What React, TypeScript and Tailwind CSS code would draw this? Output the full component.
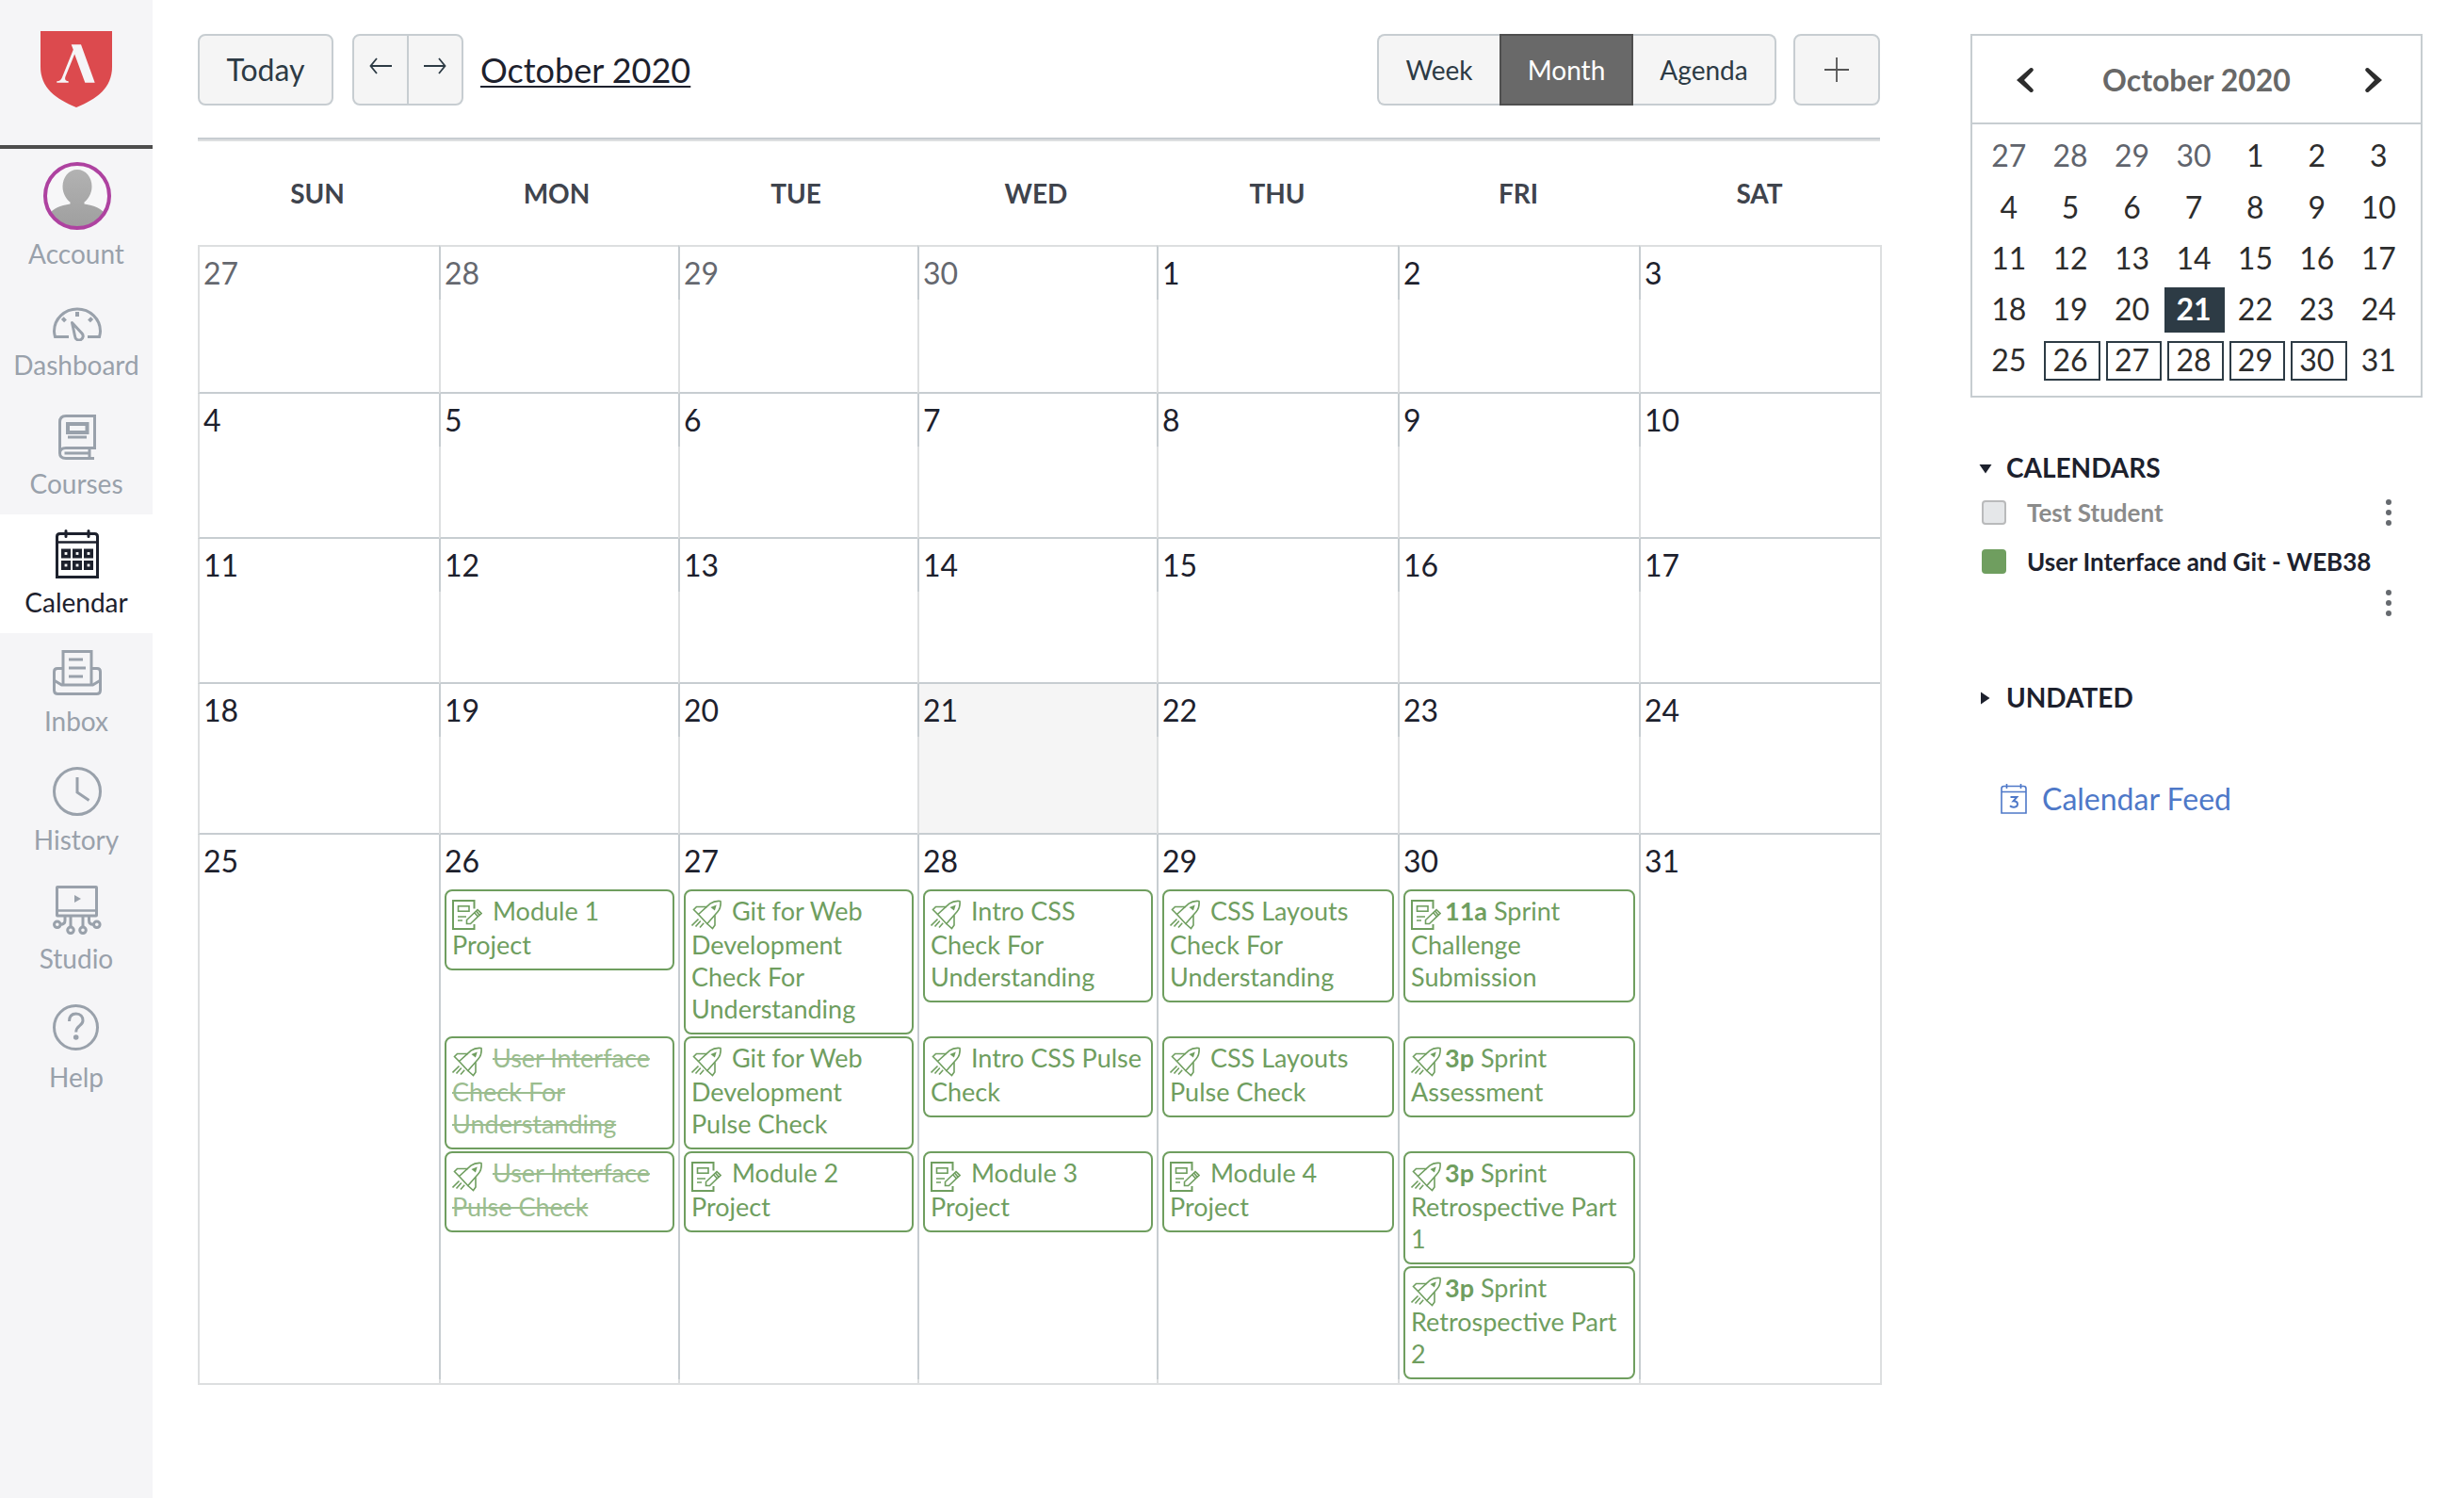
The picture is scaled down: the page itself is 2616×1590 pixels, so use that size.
import React from "react";

type IconName = "assignment" | "quiz";

interface CalendarEvent {
  icon: IconName;
  time?: string;
  title: string;
  done?: boolean;
}

const WEEKDAYS = ["SUN", "MON", "TUE", "WED", "THU", "FRI", "SAT"];

const WEEKS: number[][] = [
  [27, 28, 29, 30, 1, 2, 3],
  [4, 5, 6, 7, 8, 9, 10],
  [11, 12, 13, 14, 15, 16, 17],
  [18, 19, 20, 21, 22, 23, 24],
  [25, 26, 27, 28, 29, 30, 31],
];

/* One entry per stacked row of the last week, one slot per weekday. */
const EVENT_ROWS: (CalendarEvent | null)[][] = [
  [
    null,
    { icon: "assignment", title: "Module 1 Project" },
    { icon: "quiz", title: "Git for Web Development Check For Understanding" },
    { icon: "quiz", title: "Intro CSS Check For Understanding" },
    { icon: "quiz", title: "CSS Layouts Check For Understanding" },
    { icon: "assignment", time: "11a", title: "Sprint Challenge Submission" },
    null,
  ],
  [
    null,
    { icon: "quiz", title: "User Interface Check For Understanding", done: true },
    { icon: "quiz", title: "Git for Web Development Pulse Check" },
    { icon: "quiz", title: "Intro CSS Pulse Check" },
    { icon: "quiz", title: "CSS Layouts Pulse Check" },
    { icon: "quiz", time: "3p", title: "Sprint Assessment" },
    null,
  ],
  [
    null,
    { icon: "quiz", title: "User Interface Pulse Check", done: true },
    { icon: "assignment", title: "Module 2 Project" },
    { icon: "assignment", title: "Module 3 Project" },
    { icon: "assignment", title: "Module 4 Project" },
    { icon: "quiz", time: "3p", title: "Sprint Retrospective Part 1" },
    null,
  ],
  [null, null, null, null, null, { icon: "quiz", time: "3p", title: "Sprint Retrospective Part 2" }, null],
];

/* ---------- Icons ---------- */

function Logo() {
  return (
    <svg width="76" height="81" viewBox="0 0 76 81" aria-hidden="true">
      <path d="M0 0H76V38C76 60 60 72 38 81C16 72 0 60 0 38Z" fill="#dc4a4e" />
      <path
        d="M32.7 14.3H43L57.7 54.7H47.3L36.2 24.5L26.4 48.5C25.6 51 26.4 53 29.7 53.2V54.7H17.3V53.3C20.3 53 21.8 51.6 22.8 49.4L34.8 19.7Z"
        fill="#f5f5f7"
      />
    </svg>
  );
}

function Avatar() {
  return (
    <svg width="72" height="72" viewBox="0 0 72 72" aria-hidden="true">
      <defs>
        <linearGradient id="person" x1="0" y1="0" x2="0" y2="1">
          <stop offset="0" stopColor="#b2b2b2" />
          <stop offset="1" stopColor="#9e9e9e" />
        </linearGradient>
        <clipPath id="disc">
          <circle cx="36" cy="36" r="33" />
        </clipPath>
      </defs>
      <circle cx="36" cy="36" r="34" fill="#f7f7f8" />
      <path
        clipPath="url(#disc)"
        d="M36 8C45 8 51.500 16 51.500 26C51.500 34 47 40 43.500 42.500V44.500C54 46 62 49 66 56V72H6V56C10 49 18 46 28.500 44.500V42.500C25 40 20.500 34 20.500 26C20.500 16 27 8 36 8Z"
        fill="url(#person)"
      />
      <circle cx="36" cy="36" r="34" fill="none" stroke="#ae42a0" strokeWidth="4" />
    </svg>
  );
}

const line = { fill: "none", stroke: "currentColor", strokeWidth: 3 } as const;

function DashboardIcon() {
  return (
    <svg width="52" height="36" viewBox="0 0 52 36" aria-hidden="true" {...line}>
      <path d="M17 31.500H2.500Q1.500 28 1.500 25.500A24.500 23.500 0 0 1 50.500 25.500Q50.500 28 49.500 31.500H37" />
      <path d="M26 5V10M10.300 11.700L13.500 14.900M41.700 11.700L38.500 14.900" strokeWidth="4" />
      <path d="M20.500 16.500L30.700 27.500A4.300 4.300 0 1 1 23.600 31Z" strokeLinejoin="round" />
    </svg>
  );
}

function CoursesIcon() {
  return (
    <svg width="40" height="48" viewBox="0 0 40 48" aria-hidden="true" {...line}>
      <path d="M1.500 41V8Q1.500 1.500 8 1.500H38.500V35.500H8Q1.500 35.500 1.500 41Q1.500 46.500 8 46.500H38" />
      <path d="M33 36V46M6.500 41H32" />
      <rect x="10" y="10" width="20.500" height="9" strokeWidth="4" />
      <path d="M10 24H30" />
    </svg>
  );
}

function CalendarIcon() {
  return (
    <svg width="46" height="52" viewBox="0 0 46 52" aria-hidden="true" {...line}>
      <path d="M1.500 50.500V7.500Q1.500 4.500 4.500 4.500H41.500Q44.500 4.500 44.500 7.500V50.500Z" />
      <path d="M1.500 13.500H44.500" strokeWidth="2.500" />
      <path d="M11 1.500V7.500M35 1.500V7.500" strokeLinecap="round" />
      {[25.5, 38].map((y) =>
        [11, 23, 35].map((x) => (
          <rect key={`${x}-${y}`} x={x - 3.2} y={y - 3.2} width="6.400" height="6.400" strokeWidth="3.600" />
        )),
      )}
    </svg>
  );
}

function InboxIcon() {
  return (
    <svg width="52" height="48" viewBox="0 0 52 48" aria-hidden="true" {...line}>
      <path d="M11 36.500V1.500H41V36.500" />
      <path d="M11 19.500H5Q1.500 19.500 1.500 23V42.500Q1.500 46.500 5.500 46.500H46.500Q50.500 46.500 50.500 42.500V23Q50.500 19.500 47 19.500H41" />
      <path d="M2 32.500L9.500 37H42.500L50 32.500" />
      <path d="M17 10H32M17 19H35M17 28H32" />
    </svg>
  );
}

function HistoryIcon() {
  return (
    <svg width="52" height="52" viewBox="0 0 52 52" aria-hidden="true" {...line}>
      <circle cx="26" cy="26" r="24.500" />
      <path d="M26 11V27L38.500 35.500" />
    </svg>
  );
}

function StudioIcon() {
  return (
    <svg width="52" height="52" viewBox="0 0 52 52" aria-hidden="true" {...line}>
      <rect x="4.500" y="1.500" width="42" height="30.500" rx="0.500" />
      <path d="M4.500 26.500H46.500" strokeWidth="2.500" />
      <path d="M23 10L30 14L23 18Z" fill="currentColor" stroke="none" />
      <path d="M13 32V37Q13 41.300 8 41.300M38.500 32V37Q38.500 41.300 43 41.300M19 32V44M32 32V44" />
      <circle cx="4.800" cy="41.300" r="3.300" />
      <circle cx="19" cy="47.300" r="3.300" />
      <circle cx="32" cy="47.300" r="3.300" />
      <circle cx="46.800" cy="41.300" r="3.300" />
    </svg>
  );
}

function HelpIcon() {
  return (
    <svg width="52" height="52" viewBox="0 0 52 52" aria-hidden="true" {...line}>
      <circle cx="24.500" cy="24.500" r="23" />
      <path d="M17.500 18C17.500 12.500 20.500 10 24.700 10C29.500 10 32 13.200 32 17.200C32 23 24.700 22.500 24.700 29.500" />
      <circle cx="24.700" cy="35" r="2.800" fill="currentColor" stroke="none" />
    </svg>
  );
}

function EventIcon({ name }: { name: IconName }) {
  return (
    <svg
      width="32"
      height="32"
      viewBox="0 0 32 32"
      fill="none"
      stroke="currentColor"
      strokeWidth="1.600"
      className="-mb-px mr-1 inline-block align-[-9px]"
      aria-hidden="true"
    >
      {name === "assignment" ? (
        <>
          <path d="M23.500 9.500V1H1V31H23.500V26" strokeWidth="2" />
          <rect x="6.500" y="6.800" width="11.500" height="5.400" />
          <path d="M6 18H15M6 22H11" />
          <path d="M15.500 25.500V21.500L27 10.500L31 14.500L19.500 25.500ZM23.700 13.800L27.300 17.800M26 12.500L28.800 16" />
        </>
      ) : (
        <>
          <path d="M31 1.500C31.500 6 30.500 10 28 12.800L16.800 25.500L7.500 15.500L20 4.200C23 2 26.500 1 31 1.500Z" strokeLinejoin="round" />
          <path d="M17 7.500H5.500L2.500 10.500L7.500 15.500M25 16.500V27L22.500 30.500L16.800 25.500" />
          <path d="M7.500 20.500L0.500 27.500M9.800 22.500L4.500 28.500M13.200 24.800L9 29.500" />
          <path d="M22 8.300L25.500 6.800L24.500 10.200Z" fill="currentColor" />
        </>
      )}
    </svg>
  );
}

function Kebab({ label }: { label: string }) {
  return (
    <button type="button" aria-label={label} className="flex h-8 w-8 items-center justify-center text-[#666a6f]">
      <svg width="6" height="28" viewBox="0 0 6 28" fill="currentColor" aria-hidden="true">
        <circle cx="3" cy="3" r="3" />
        <circle cx="3" cy="14" r="3" />
        <circle cx="3" cy="25" r="3" />
      </svg>
    </button>
  );
}

/* ---------- Sidebar ---------- */

const NAV = [
  { label: "Dashboard", Icon: DashboardIcon, box: "h-11 items-end", active: false },
  { label: "Courses", Icon: CoursesIcon, box: "h-13 items-center pt-1", active: false },
  { label: "Calendar", Icon: CalendarIcon, box: "h-13 items-center", active: true },
  { label: "Inbox", Icon: InboxIcon, box: "h-13 items-center", active: false },
  { label: "History", Icon: HistoryIcon, box: "h-13 items-center", active: false },
  { label: "Studio", Icon: StudioIcon, box: "h-13 items-center", active: false },
  { label: "Help", Icon: HelpIcon, box: "h-13 items-center", active: false },
];

function Sidebar() {
  return (
    <nav className="w-[162px] shrink-0 bg-[#f5f5f7] text-[28px] leading-[34px]" aria-label="Global">
      <a href="#home" aria-label="Home" className="flex h-[158px] items-start justify-center border-b-4 border-[#4d4d4d] pt-[33px]">
        <Logo />
      </a>
      <ul>
        <li>
          <a href="#account" className="flex flex-col items-center pb-4 pt-3.5 text-[#99a1ab]">
            <span className="flex pl-0.5">
              <Avatar />
            </span>
            <span className="mt-2">Account</span>
          </a>
        </li>
        {NAV.map(({ label, Icon, box, active }) => (
          <li key={label}>
            <a
              href={`#${label.toLowerCase()}`}
              aria-current={active ? "page" : undefined}
              className={`flex flex-col items-center pb-4 pt-4 ${active ? "bg-white text-[#1d212d]" : "text-[#99a1ab]"}`}
            >
              <span className={`flex pl-0.5 ${box}`}>
                <Icon />
              </span>
              <span className="mt-2">{label}</span>
            </a>
          </li>
        ))}
      </ul>
    </nav>
  );
}

/* ---------- Main calendar ---------- */

function Toolbar() {
  const button = "flex h-full items-center justify-center border-2 border-[#c7cdd1] bg-[#f5f5f5]";
  return (
    <header className="mr-0.5 flex h-28 items-start border-b-2 border-[#c7cdd1]">
      <div className="flex h-[76px] w-full items-center text-[#2d3b45]">
        <button type="button" className={`${button} w-36 rounded-lg text-[32px]`}>
          Today
        </button>
        <div className="ml-5 flex h-full">
          <button type="button" aria-label="Previous month" className={`${button} w-15 rounded-l-lg pb-2`}>
            <svg width="24" height="18" viewBox="0 0 24 18" fill="none" stroke="currentColor" strokeWidth="1.800" aria-hidden="true">
              <path d="M24 9H1.500M8 1L1.500 9L8 17" />
            </svg>
          </button>
          <button type="button" aria-label="Next month" className={`${button} -ml-0.5 w-15 rounded-r-lg pb-2`}>
            <svg width="24" height="18" viewBox="0 0 24 18" fill="none" stroke="currentColor" strokeWidth="1.800" aria-hidden="true">
              <path d="M0 9H22.500M16 1L22.500 9L16 17" />
            </svg>
          </button>
        </div>
        <a
          href="#pick-date"
          className="ml-[18px] text-[36px] leading-10 text-[#1d212d] underline decoration-2 underline-offset-[3px]"
        >
          October 2020
        </a>
        <div className="ml-auto flex h-full text-[28px]" role="group" aria-label="View">
          <button type="button" className={`${button} w-[130px] rounded-l-lg border-r-0`}>
            Week
          </button>
          <button
            type="button"
            aria-pressed="true"
            className="flex h-full w-[142px] items-center justify-center border-2 border-[#4f4f4f] bg-[#696969] text-white"
          >
            Month
          </button>
          <button type="button" className={`${button} w-[152px] rounded-r-lg border-l-0`}>
            Agenda
          </button>
        </div>
        <button type="button" aria-label="Create new event" className={`${button} ml-[18px] w-[92px] rounded-lg`}>
          <svg width="26" height="26" viewBox="0 0 26 26" stroke="#555" strokeWidth="1.800" aria-hidden="true">
            <path d="M13 0V26M0 13H26" />
          </svg>
        </button>
      </div>
    </header>
  );
}

function EventCard({ event }: { event: CalendarEvent }) {
  return (
    <a href="#event" className="block rounded-lg border-2 border-[#6f9e5f] pb-2 pl-1.5 pr-1 pt-1 text-[27px] leading-[34px] text-[#6f9e5f]">
      <EventIcon name={event.icon} />
      {event.time && <strong className="font-bold">{event.time}</strong>}{" "}
      {event.done ? <s className="text-[#9bbd8f] decoration-2">{event.title}</s> : event.title}
    </a>
  );
}

const dayEdge = (col: number) => `border-l-2 ${col === 0 ? "border-l-[#dddfe0]" : "border-l-[#c7cdd1]"}`;

function MonthTable() {
  return (
    <table className="w-full table-fixed border-separate border-spacing-0 border-r-2 border-[#dddfe0]">
      <colgroup>
        <col className="w-[256px]" />
        <col className="w-[254px]" />
        <col className="w-[254px]" />
        <col className="w-[254px]" />
        <col className="w-[256px]" />
        <col className="w-[256px]" />
        <col className="w-[256px]" />
      </colgroup>
      <tbody>
        {WEEKS.map((week, w) => {
          const last = w === WEEKS.length - 1;
          return (
            <React.Fragment key={w}>
              <tr>
                {week.map((day, col) => (
                  <td
                    key={col}
                    className={`px-1 py-0 text-[32px] leading-10 ${dayEdge(col)} ${
                      w === 0 ? "h-[58px] border-t-2 border-t-[#dddfe0]" : "h-14"
                    } ${w === 0 && day > 20 ? "text-[#65686f]" : "text-[#1d212d]"} ${
                      w === 3 && day === 21 ? "bg-[#f5f5f5]" : ""
                    }`}
                  >
                    {day}
                  </td>
                ))}
              </tr>
              {last ? (
                <>
                  {EVENT_ROWS.map((row, r) => (
                    <tr key={r}>
                      {row.map((event, col) => (
                        <td key={col} className={`px-1 pt-0.5 align-top ${dayEdge(col)}`}>
                          {event && <EventCard event={event} />}
                        </td>
                      ))}
                    </tr>
                  ))}
                  <tr>
                    {week.map((_, col) => (
                      <td key={col} className="h-1.5 border-b-2 border-l-2 border-[#dddfe0] p-0" />
                    ))}
                  </tr>
                </>
              ) : (
                <tr>
                  {week.map((day, col) => (
                    <td
                      key={col}
                      className={`border-b-2 border-l-2 border-b-[#c7cdd1] border-l-[#dddfe0] p-0 ${
                        w === 0 ? "h-25" : w === 3 ? "h-26" : "h-[98px]"
                      } ${w === 3 && day === 21 ? "bg-[#f5f5f5]" : ""}`}
                    />
                  ))}
                </tr>
              )}
            </React.Fragment>
          );
        })}
      </tbody>
    </table>
  );
}

function MonthCalendar() {
  return (
    <main className="min-w-0 flex-1 pt-9">
      <Toolbar />
      <div className="mr-0.5 grid h-28 grid-cols-[254fr_254fr_254fr_256fr_256fr_256fr_256fr] border-t-2 border-[#dddfe0] pt-[38px] text-center text-[28px] font-bold leading-[34px] text-[#3f444d]">
        {WEEKDAYS.map((name) => (
          <div key={name}>{name}</div>
        ))}
      </div>
      <MonthTable />
    </main>
  );
}

/* ---------- Right column ---------- */

function MiniCalendar() {
  return (
    <section className="border-2 border-[#c7cdd1]" aria-label="Mini calendar">
      <div className="flex h-[94px] items-center justify-between border-b-2 border-[#c7cdd1] px-10 pt-0.5 text-[#2d2d2d]">
        <button type="button" aria-label="Previous" className="flex w-8 justify-center">
          <svg width="20" height="28" viewBox="0 0 20 28" fill="currentColor" aria-hidden="true">
            <path d="M15.500 1.200Q17.500 0.500 18.500 2T18 4.800L9 14L18 23.200Q19.500 24.500 18.500 26T15.500 26.800L1 14Z" />
          </svg>
        </button>
        <h2 className="text-[32px] font-bold leading-10 text-[#686868]">October 2020</h2>
        <button type="button" aria-label="Next" className="flex w-8 justify-end">
          <svg width="20" height="28" viewBox="0 0 20 28" fill="currentColor" aria-hidden="true">
            <path d="M4.500 1.200Q2.500 0.500 1.500 2T2 4.800L11 14L2 23.200Q0.500 24.500 1.500 26T4.500 26.800L19 14Z" />
          </svg>
        </button>
      </div>
      <div className="pb-2.5 pl-2 pr-2.5 pt-1.5">
        <table className="w-full table-fixed border-collapse text-center text-[32px] leading-[38px] text-[#2d2d2d]">
          <tbody>
            {WEEKS.map((week, w) => (
              <tr key={w}>
                {week.map((day, col) => {
                  const today = w === 3 && day === 21;
                  const hasEvents = w === 4 && col > 0 && col < 6;
                  return (
                    <td key={col} className={`p-0 ${w === 0 ? "h-14" : "h-[54px]"}`}>
                      {today ? (
                        <div className="mr-0.5 flex h-12 items-center justify-center bg-[#2d3b45] pb-0.5 pr-0.5 font-bold text-white">
                          {day}
                        </div>
                      ) : hasEvents ? (
                        <div className="mx-[3px] flex h-[42px] items-center justify-center border-2 border-[#2d3b45] pb-0.5 pr-1">
                          {day}
                        </div>
                      ) : (
                        <div className={`pb-0.5 pr-1 ${w === 0 && day > 20 ? "text-[#60646d]" : ""}`}>{day}</div>
                      )}
                    </td>
                  );
                })}
              </tr>
            ))}
          </tbody>
        </table>
      </div>
    </section>
  );
}

function SideColumn() {
  return (
    <aside className="w-[480px] shrink-0 pt-9 text-[#1d212d]">
      <MiniCalendar />
      <section className="mt-14 pl-2">
        <h2>
          <button type="button" aria-expanded="true" className="flex items-center text-[28px] font-bold leading-9">
            <svg width="16" height="12" viewBox="0 0 16 12" fill="currentColor" className="mr-3.5 mt-1" aria-hidden="true">
              <path d="M1.500 1H14.500L8 10.500Z" />
            </svg>
            CALENDARS
          </button>
        </h2>
        <ul className="text-[26px] font-bold leading-8">
          <li className="mt-3.5 flex items-center pl-1">
            <input
              id="cal-student"
              type="checkbox"
              className="h-[26px] w-[26px] appearance-none rounded-[4px] border-2 border-[#b9babb] bg-[#e5e7e9]"
            />
            <label htmlFor="cal-student" className="ml-[22px] text-[#8b8b8b]">
              Test Student
            </label>
            <span className="ml-auto mr-5 flex">
              <Kebab label="Test Student options" />
            </span>
          </li>
          <li className="mt-5 flex flex-wrap items-center pl-1">
            <input
              id="cal-web38"
              type="checkbox"
              defaultChecked
              className="h-[26px] w-[26px] appearance-none rounded-[4px] bg-[#6f9e5f]"
            />
            <label htmlFor="cal-web38" className="ml-[22px]">
              User Interface and Git - WEB38
            </label>
            <span className="mr-5 mt-3 flex w-full justify-end">
              <Kebab label="User Interface and Git options" />
            </span>
          </li>
        </ul>
      </section>
      <section className="mt-[66px] pl-2">
        <h2>
          <button type="button" aria-expanded="false" className="flex items-center text-[28px] font-bold leading-9">
            <svg width="16" height="14" viewBox="0 0 16 14" fill="currentColor" className="mr-3.5 mt-0.5" aria-hidden="true">
              <path d="M3 0.500V13.500L12.500 7Z" />
            </svg>
            UNDATED
          </button>
        </h2>
      </section>
      <a href="#feed" className="mt-[70px] flex items-center pl-8 text-[32px] leading-10 text-[#4e78c8]">
        <svg width="28" height="32" viewBox="0 0 28 32" fill="none" stroke="currentColor" strokeWidth="1.600" className="mr-4" aria-hidden="true">
          <path d="M1 31V5Q1 2.500 3.500 2.500H24.500Q27 2.500 27 5V31ZM1 8.500H27M6.500 0V5M21.500 0V5" />
          <path d="M10.500 14H17.300L13.500 18.300C16.500 18.200 18 19.500 18 21.500C18 24 15.500 25 13.500 24.700C12 24.600 10.800 24 10 23.200" strokeWidth="2" />
        </svg>
        Calendar Feed
      </a>
    </aside>
  );
}

export default function App() {
  return (
    <div className="flex min-h-screen bg-white font-[Lato,sans-serif]">
      <Sidebar />
      <div className="flex min-w-0 flex-1 items-start gap-[94px] pl-12 pr-11">
        <MonthCalendar />
        <SideColumn />
      </div>
    </div>
  );
}
